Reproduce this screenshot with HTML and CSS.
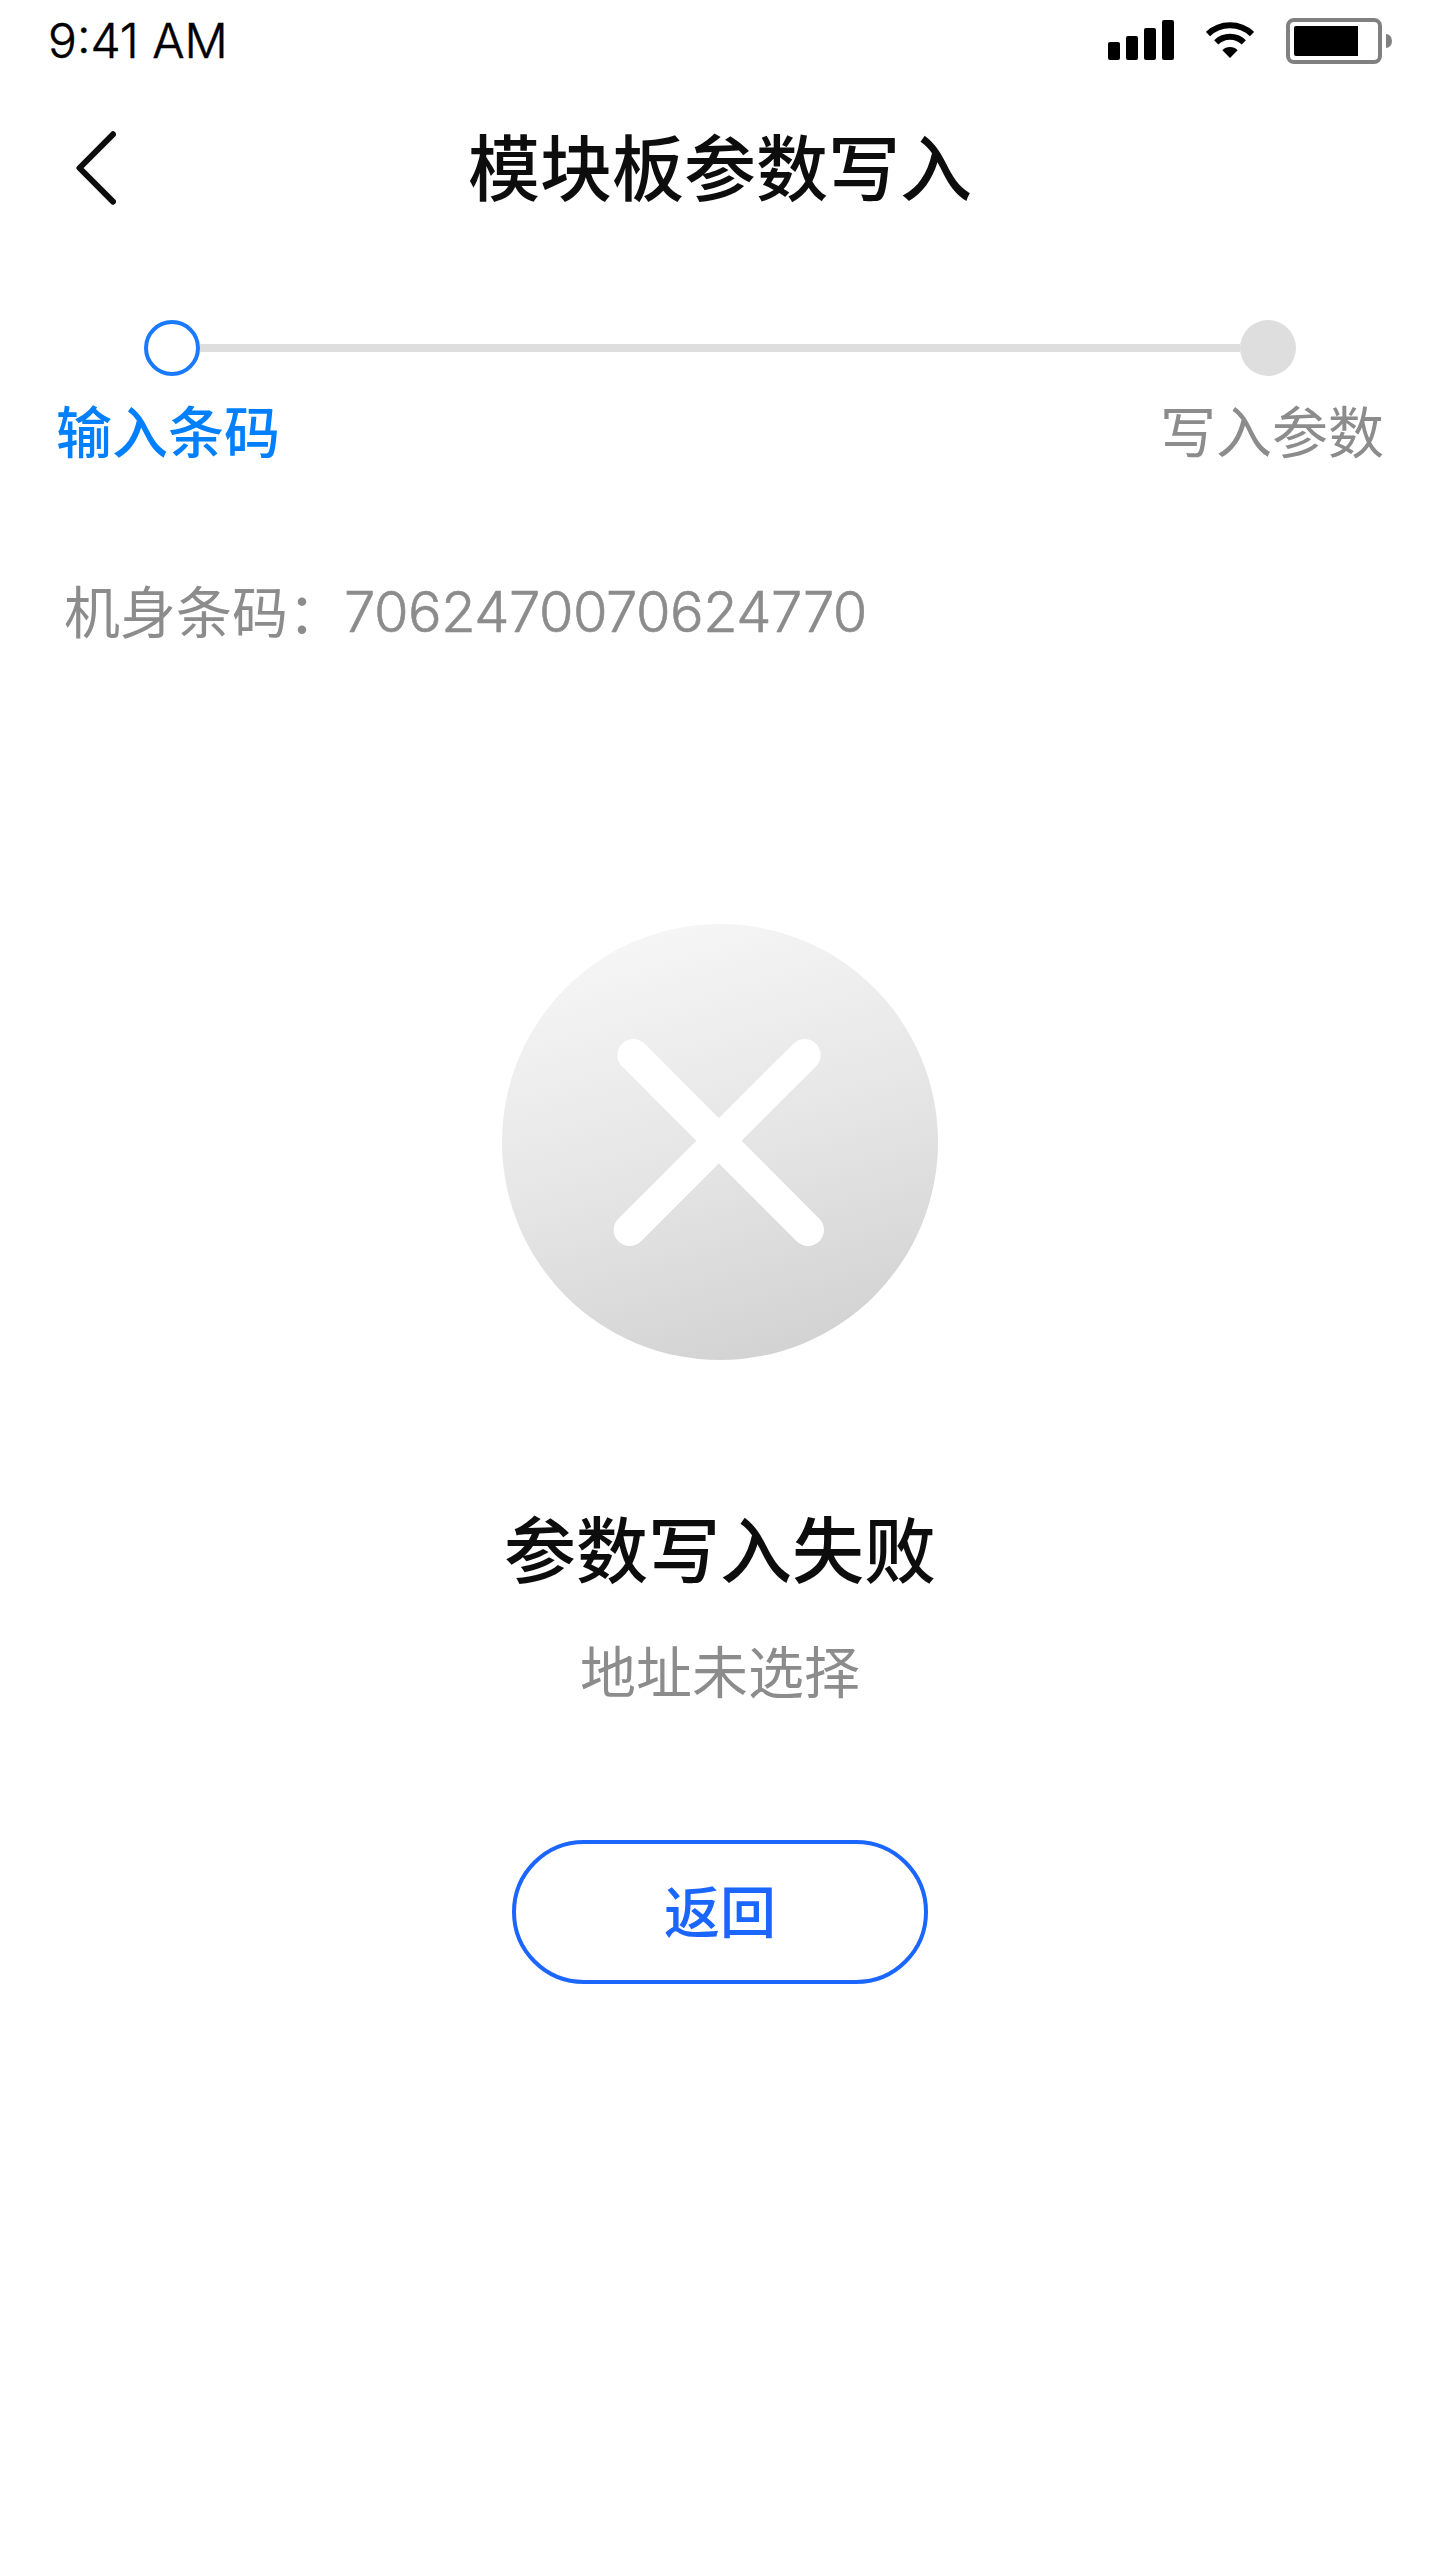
FILE: index.html
```html
<!DOCTYPE html>
<html lang="zh-CN">
<head>
<meta charset="utf-8">
<title>模块板参数写入</title>
<link rel="stylesheet" href="styles.css">
</head>
<body>
<div class="screen">
  <div class="status-bar">
    <span class="time">9:41 AM</span>
    <div class="status-icons">
      <svg class="signal" width="66" height="40" viewBox="0 0 66 40">
        <rect x="0" y="22" width="12" height="18" rx="2"/>
        <rect x="18" y="16" width="12" height="24" rx="2"/>
        <rect x="36" y="8" width="12" height="32" rx="2"/>
        <rect x="54" y="0" width="12" height="40" rx="2"/>
      </svg>
      <svg class="wifi" width="48" height="36" viewBox="0 0 48 36">
        <path d="M2 12.1A32 32 0 0 1 46 12.1" fill="none" stroke="#000" stroke-width="6"/>
        <path d="M10.2 20.3A20 20 0 0 1 37.800 20.3" fill="none" stroke="#000" stroke-width="6"/>
        <path d="M16.400 28.300A10.500 10.500 0 0 1 31.600 28.300L24 36Z"/>
      </svg>
      <svg class="battery" width="106" height="46" viewBox="0 0 106 46">
        <rect x="2" y="2" width="92" height="42" rx="6" fill="none" stroke="#808080" stroke-width="4"/>
        <path d="M10 8H72V38H10A2 2 0 0 1 8 36V10A2 2 0 0 1 10 8Z"/>
        <path d="M100 16A6 7 0 0 1 100 30Z" fill="#808080"/>
      </svg>
    </div>
  </div>
  <header class="nav">
    <svg class="back" width="40" height="74" viewBox="0 0 40 74">
      <path d="M37 3.300L3.500 37L37 70.700" fill="none" stroke="#0d0d0d" stroke-width="6" stroke-linecap="round" stroke-linejoin="round"/>
    </svg>
    <h1 class="title">模块板参数写入</h1>
  </header>
  <div class="steps">
    <div class="track">
      <span class="dot dot-active"></span>
      <span class="line"></span>
      <span class="dot"></span>
    </div>
    <div class="labels">
      <span class="label-active">输入条码</span>
      <span>写入参数</span>
    </div>
  </div>
  <p class="barcode"><span>机身条码：</span><span class="digits">7062470070624770</span></p>
  <main class="result">
    <svg class="fail" width="436" height="436" viewBox="0 0 436 436">
      <defs>
        <linearGradient id="disc" x1="0.34" y1="0" x2="0.64" y2="1">
          <stop offset="0" stop-color="#f6f6f6"/>
          <stop offset="0.5" stop-color="#e6e6e6"/>
          <stop offset="1" stop-color="#d2d2d2"/>
        </linearGradient>
      </defs>
      <circle cx="218" cy="218" r="218" fill="url(#disc)"/>
      <path d="M131.300 131L306 306M302.700 131L127.700 306" stroke="#fff" stroke-width="32" stroke-linecap="round"/>
    </svg>
    <h2 class="result-title">参数写入失败</h2>
    <p class="reason">地址未选择</p>
    <button class="return">返回</button>
  </main>
</div>
</body>
</html>
```
FILE: styles.css
```css
* {
  box-sizing: border-box;
  margin: 0;
  padding: 0;
}

body {
  background: #fff;
  font-family: Inter, "Noto Sans CJK SC", sans-serif;
}

.screen {
  width: 1440px;
  height: 2560px;
  overflow: hidden;
  background: #fff;
}

.status-bar {
  display: flex;
  justify-content: space-between;
  height: 80px;
  padding: 0 48px;
}

.time {
  font-size: 48px;
  font-weight: 300;
  line-height: 82px;
  letter-spacing: 0;
  -webkit-text-stroke: 0.5px #000;
  color: #000;
}

.status-icons {
  display: flex;
  align-items: flex-start;
}

.signal {
  margin-top: 20px;
}

.wifi {
  margin: 22px 32px 0;
}

.battery {
  margin-top: 18px;
}

.nav {
  display: grid;
  grid-template-columns: 40px 1fr 40px;
  align-items: center;
  height: 176px;
  padding: 0 76px;
}

.title,
.result-title {
  padding-top: 2px;
  font-size: 72px;
  font-weight: 500;
  line-height: 102px;
  text-align: center;
  color: #0d0d0d;
}

.steps {
  padding-top: 64px;
}

.track {
  display: flex;
  align-items: center;
  padding: 0 144px;
}

.dot {
  width: 56px;
  height: 56px;
  border-radius: 50%;
  background: #dedede;
}

.dot-active {
  border: 4px solid #1a7aff;
  background: #fff;
}

.line {
  flex: 1;
  height: 8px;
  background: #dedede;
}

.labels {
  display: flex;
  justify-content: space-between;
  padding: 17px 56px 0;
  font-size: 56px;
  line-height: 80px;
  color: #8c8c8c;
}

.label-active {
  font-weight: 500;
  color: #0080ff;
}

.barcode {
  display: flex;
  padding: 100px 64px 0;
  font-size: 56px;
  line-height: 80px;
  color: #8c8c8c;
}

.digits {
  font-weight: 300;
  line-height: 79px;
  letter-spacing: -0.5px;
  -webkit-text-stroke: 0.6px #8c8c8c;
}

.result {
  display: flex;
  flex-direction: column;
  align-items: center;
  padding-top: 271px;
}

.result-title {
  margin-top: 138px;
}

.reason {
  margin-top: 31px;
  font-size: 56px;
  line-height: 80px;
  color: #8c8c8c;
}

.return {
  width: 416px;
  height: 144px;
  margin-top: 127px;
  padding-top: 2px;
  border: 4px solid #1a66ff;
  border-radius: 72px;
  background: #fff;
  font: 500 56px/80px Inter, "Noto Sans CJK SC", sans-serif;
  color: #1a66ff;
}
```
